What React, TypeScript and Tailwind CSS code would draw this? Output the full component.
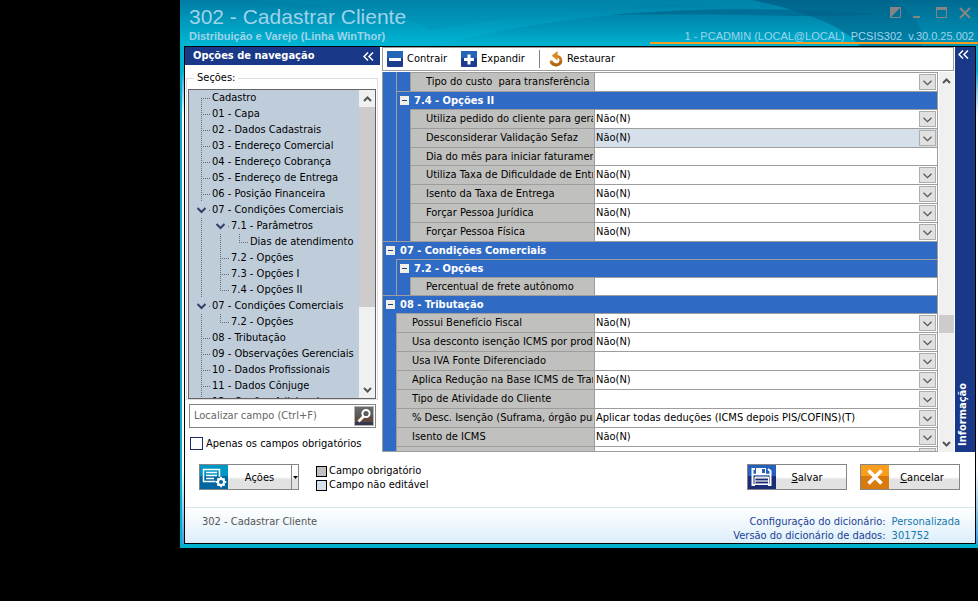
import { useId, useState } from "react";
import type { ReactNode } from "react";

type Cell = "first" | "tee" | "end" | "line" | "open";

const sections: { label: string; cells: Cell[] }[] = [
  { label: "Cadastro", cells: ["first"] },
  { label: "01 - Capa", cells: ["tee"] },
  { label: "02 - Dados Cadastrais", cells: ["tee"] },
  { label: "03 - Endereço Comercial", cells: ["tee"] },
  { label: "04 - Endereço Cobrança", cells: ["tee"] },
  { label: "05 - Endereço de Entrega", cells: ["tee"] },
  { label: "06 - Posição Financeira", cells: ["tee"] },
  { label: "07 - Condições Comerciais", cells: ["open"] },
  { label: "7.1 - Parâmetros", cells: ["line", "open"] },
  { label: "Dias de atendimento", cells: ["line", "line", "end"] },
  { label: "7.2 - Opções", cells: ["line", "tee"] },
  { label: "7.3 - Opções I", cells: ["line", "tee"] },
  { label: "7.4 - Opções II", cells: ["line", "end"] },
  { label: "07 - Condições Comerciais", cells: ["open"] },
  { label: "7.2 - Opções", cells: ["line", "end"] },
  { label: "08 - Tributação", cells: ["tee"] },
  { label: "09 - Observações Gerenciais", cells: ["tee"] },
  { label: "10 - Dados Profissionais", cells: ["tee"] },
  { label: "11 - Dados Cônjuge", cells: ["tee"] },
  { label: "12 - Opções Adicionais", cells: ["tee"] },
];

function TreeCell({ type }: { type: Cell }) {
  if (type === "open") {
    return (
      <svg width="19" height="16" className="shrink-0" fill="none">
        <path d="M5.5 6 L9.5 10 L13.5 6" stroke="#34406b" strokeWidth="2" />
        <path d="M17 8.5 H18" stroke="#6b6b6b" />
      </svg>
    );
  }
  return (
    <svg width="19" height="16" className="shrink-0" fill="none" stroke="#6b6b6b" strokeDasharray="1 1" shapeRendering="crispEdges">
      {type === "first" && <path d="M9.5 8 V16" />}
      {type === "end" && <path d="M9.5 0 V8" />}
      {(type === "tee" || type === "line") && <path d="M9.5 0 V16" />}
      {type !== "line" && <path d="M9 8.5 H18" />}
    </svg>
  );
}

function Chevron({ up = false }: { up?: boolean }) {
  return (
    <svg width="9" height="6" viewBox="0 0 9 6" fill="none" stroke="#565656" strokeWidth="2">
      <path d={up ? "M1 5 L4.5 1.5 L8 5" : "M1 1 L4.5 4.5 L8 1"} />
    </svg>
  );
}

function DoubleChevron() {
  return (
    <svg width="11" height="9" viewBox="0 0 11 9" fill="none" stroke="#fff" strokeWidth="1.5">
      <path d="M5 .5 L1 4.5 L5 8.5 M10 .5 L6 4.5 L10 8.5" />
    </svg>
  );
}

function HeaderArt() {
  return (
    <svg className="absolute inset-0 h-full w-full" viewBox="0 0 798 46" preserveAspectRatio="none">
      <defs>
        <linearGradient id="sky" x1="0" y1="0" x2="0" y2="1">
          <stop offset="0" stopColor="#007ca4" />
          <stop offset=".5" stopColor="#009bbe" />
          <stop offset="1" stopColor="#00b7d4" />
        </linearGradient>
        <linearGradient id="sweep" x1="0" y1="0" x2="0" y2="1">
          <stop offset="0" stopColor="#007fa6" />
          <stop offset=".5" stopColor="#0095b8" />
          <stop offset="1" stopColor="#00b5d2" />
        </linearGradient>
        <linearGradient id="deep" x1="0" y1="0" x2="0" y2="1">
          <stop offset="0" stopColor="#00658c" />
          <stop offset="1" stopColor="#0083a8" />
        </linearGradient>
        <linearGradient id="edge" x1="0" y1="0" x2="0" y2="1">
          <stop offset="0" stopColor="#006a91" />
          <stop offset="1" stopColor="#0096b9" />
        </linearGradient>
      </defs>
      <rect width="798" height="46" fill="url(#sky)" />
      <path d="M60 0 H580 V8 C440 -2 370 12 250 30 C220 10 150 4 60 0Z" fill="#0090b4" opacity=".35" />
      <path d="M250 46 C330 27 430 9 560 9 C620 9 660 12 690 15 L798 46Z" fill="url(#sweep)" />
      <path d="M573 0 H798 V46 H680 C665 26 620 10 573 0Z" fill="url(#deep)" />
      <path d="M430 15 C520 7 620 8 695 14 C650 19 560 13 430 15Z" fill="#006088" opacity=".55" />
      <path d="M711 0 H798 V46 H742 C745 26 732 10 711 0Z" fill="url(#edge)" />
    </svg>
  );
}

function WindowButtons() {
  return (
    <div className="flex items-center gap-[11px] text-[#858585]">
      <button type="button" aria-label="Tema">
        <svg width="12" height="12"><path d="M.5.5 H10.5 V10.5 H.5Z" fill="none" stroke="currentColor" /><path d="M0 0 H11 L0 11Z" fill="currentColor" /></svg>
      </button>
      <button type="button" aria-label="Minimizar">
        <svg width="12" height="12"><path d="M0 9 H7 V11 H0Z" fill="currentColor" /></svg>
      </button>
      <button type="button" aria-label="Maximizar">
        <svg width="12" height="12"><path d="M.5.5 H10.5 V10.5 H.5Z" fill="none" stroke="currentColor" /><path d="M0 0 H11 V3 H0Z" fill="currentColor" /></svg>
      </button>
      <button type="button" aria-label="Fechar">
        <svg width="12" height="12"><path d="M1 1 L11 11 M11 1 L1 11" stroke="currentColor" strokeWidth="2" /></svg>
      </button>
    </div>
  );
}

function ScrollBar({ children }: { children: ReactNode }) {
  return (
    <div className="flex flex-col items-center bg-[#f0f0f0]">
      <span className="flex h-[17px] items-center"><Chevron up /></span>
      <div className="flex w-full flex-1 flex-col">{children}</div>
      <span className="flex h-[17px] items-center"><Chevron /></span>
    </div>
  );
}

function GroupTitle({ title }: { title: string }) {
  return (
    <button type="button" className="flex h-[18px] w-full items-center gap-[5px] border-t border-[#9d9d9d] bg-[#2f6ac4] pl-[3px] font-bold text-white">
      <svg width="9" height="9"><path d="M0 0 H9 V9 H0Z" fill="#f2efe6" /><path d="M2 4.5 H7" stroke="#1d3f8f" /></svg>
      {title}
    </button>
  );
}

function Group({ title, children }: { title?: string; children: ReactNode }) {
  return (
    <div>
      {title && <GroupTitle title={title} />}
      <div className="flex">
        <div className="w-[14px] shrink-0 border-r border-[#9d9d9d] bg-[#2f6ac4]" />
        <div className="min-w-0 flex-1">{children}</div>
      </div>
    </div>
  );
}

type FieldProps = {
  label: string;
  value?: string;
  text?: boolean;
  locked?: boolean;
  outer?: boolean;
};

function Field({ label, value = "", text, locked, outer }: FieldProps) {
  const id = useId();
  return (
    <div className={`flex border-t border-[#9d9d9d] ${text ? "h-[18px]" : "h-[19px]"}`}>
      <label
        htmlFor={id}
        className={`flex shrink-0 items-center border-r border-[#9d9d9d] bg-[#c0c0be] pl-[15px] pr-px ${outer ? "w-[198px]" : "w-[184px]"}`}
      >
        <span className="block overflow-hidden whitespace-pre">{label}</span>
      </label>
      {text ? (
        <input id={id} defaultValue={value} className="min-w-0 flex-1 bg-white px-px outline-none" />
      ) : (
        <div className={`relative flex min-w-0 flex-1 ${locked ? "bg-[#d6e0ea]" : "bg-white"}`}>
          <select id={id} defaultValue={value} className="w-full appearance-none bg-transparent px-px outline-none">
            <option>{value}</option>
          </select>
          <span className="pointer-events-none absolute right-px top-px flex h-4 w-[17px] items-center justify-center border border-[#adadad] bg-[#e1e1e1] pt-[2px]">
            <svg width="9" height="6" viewBox="0 0 9 6" fill="none" stroke="#565656" strokeWidth="1.3">
              <path d="M.5 .8 L4.5 4.6 L8.5 .8" />
            </svg>
          </span>
        </div>
      )}
    </div>
  );
}

function Navigation() {
  const [required, setRequired] = useState(false);
  return (
    <nav className="w-[195px] shrink-0">
      <div className="flex h-[18px] items-center justify-between bg-[#1a3888] pl-2 pr-[6px] font-bold text-white">
        Opções de navegação
        <button type="button" aria-label="Recolher"><DoubleChevron /></button>
      </div>
      <fieldset className="mx-px mt-[6px] w-48 border border-[#dcdcdc] px-px pt-1">
        <legend className="ml-[6px] px-[3px] leading-[14px]">Seções:</legend>
        <div className="flex h-[310px] border border-[#646464] bg-[#bfcddb]">
          <ul className="flex-1 overflow-hidden pl-[3px]">
            {sections.map((s, i) => (
              <li key={i}>
                <button type="button" className="flex h-4 items-center whitespace-nowrap text-left">
                  {s.cells.map((c, j) => <TreeCell key={j} type={c} />)}
                  <span className="pl-px">{s.label}</span>
                </button>
              </li>
            ))}
          </ul>
          <div className="flex w-4">
            <ScrollBar>
              <div className="h-[200px] w-4 bg-[#cdcbcc]" />
            </ScrollBar>
          </div>
        </div>
      </fieldset>
      <div className="ml-1 mt-1 flex h-6 w-[187px] items-center border border-[#858585] bg-white pl-1 pr-px">
        <input aria-label="Localizar campo" placeholder="Localizar campo (Ctrl+F)" className="min-w-0 flex-1 outline-none placeholder:text-[#666]" />
        <button type="button" aria-label="Localizar" className="h-5 w-5 border border-[#b5b5b5] bg-linear-to-b from-[#6b6b6b] to-[#4c4444]">
          <svg width="18" height="18" fill="none" stroke="#fff">
            <path d="M0 10 H18 V15 H0Z" fill="#6b4638" stroke="none" opacity=".7" />
            <path d="M0 15 H18 V18 H0Z" fill="#2b2f52" stroke="none" opacity=".7" />
            <circle cx="11" cy="6.5" r="3.6" strokeWidth="2" />
            <path d="M8.5 9.5 L3.5 14.5" strokeWidth="2.6" />
          </svg>
        </button>
      </div>
      <label className="ml-[5px] mt-[9px] flex h-[13px] items-center gap-[3px] whitespace-nowrap">
        <input
          type="checkbox"
          checked={required}
          onChange={(e) => setRequired(e.target.checked)}
          className="h-[13px] w-[13px] shrink-0 appearance-none border border-[#1f2a63] bg-white checked:bg-[#1a3888]"
        />
        Apenas os campos obrigatórios
      </label>
    </nav>
  );
}

function Toolbar() {
  return (
    <div className="mr-px flex h-6 items-center gap-[14px] border border-[#9d9d9d] bg-white pl-1">
      <button type="button" className="flex items-center gap-1">
        <svg width="16" height="16"><rect width="16" height="16" rx="1" fill="#1b3d8c" /><path d="M0 0 H16 V7 H0Z" fill="#2465b8" /><path d="M2 7 H14 V10 H2Z" fill="#fff" /></svg>
        Contrair
      </button>
      <button type="button" className="flex items-center gap-1">
        <svg width="16" height="16"><rect width="16" height="16" rx="1" fill="#1b3d8c" /><path d="M0 0 H16 V7 H0Z" fill="#2465b8" /><path d="M3 7 H13 V10 H3Z M6.5 3.5 H9.5 V13.5 H6.5Z" fill="#fff" /></svg>
        Expandir
      </button>
      <div className="flex items-center gap-[9px]">
        <span className="h-[18px] w-px bg-[#808080]" />
        <button type="button" className="flex items-center gap-[3px]">
          <svg width="15" height="16" fill="none">
            <path d="M7 5.5 C10.5 5 12.3 7.6 11.9 10 C11.4 12.9 8.8 14.3 6.3 13.9 C4 13.5 2.3 11.8 1.8 9.6" stroke="#c9791c" strokeWidth="2.8" />
            <path d="M11.9 10 C11.4 12.9 8.8 14.3 6.3 13.9 C4.8 13.6 3.5 12.8 2.6 11.6" stroke="#b0650f" strokeWidth="2.8" />
            <path d="M8.6 0 V9.4 L2.6 4.8Z" fill="#d98a26" />
          </svg>
          Restaurar
        </button>
      </div>
    </div>
  );
}

function PropertyGrid() {
  return (
    <div className="mr-px mt-px flex h-[380px]">
      <div className="min-w-0 flex-1 overflow-hidden border-x border-b border-[#9d9d9d]">
        <Group>
          <Group>
            <Field label="Tipo do custo  para transferência" />
          </Group>
          <Group title="7.4 - Opções II">
            <Field label="Utiliza pedido do cliente para geração" value="Não(N)" />
            <Field label="Desconsiderar Validação Sefaz" value="Não(N)" locked />
            <Field label="Dia do mês para iniciar faturamento" text />
            <Field label="Utiliza Taxa de Dificuldade de Entrega" value="Não(N)" />
            <Field label="Isento da Taxa de Entrega" value="Não(N)" />
            <Field label="Forçar Pessoa Jurídica" value="Não(N)" />
            <Field label="Forçar Pessoa Física" value="Não(N)" />
          </Group>
        </Group>
        <Group title="07 - Condições Comerciais">
          <Group title="7.2 - Opções">
            <Field label="Percentual de frete autônomo" text />
          </Group>
        </Group>
        <Group title="08 - Tributação">
          <Field outer label="Possui Benefício Fiscal" value="Não(N)" />
          <Field outer label="Usa desconto isenção ICMS por produto" value="Não(N)" />
          <Field outer label="Usa IVA Fonte Diferenciado" />
          <Field outer label="Aplica Redução na Base ICMS de Transf." value="Não(N)" />
          <Field outer label="Tipo de Atividade do Cliente" />
          <Field outer label="% Desc. Isenção (Suframa, órgão publ.)" value="Aplicar todas deduções (ICMS depois PIS/COFINS)(T)" />
          <Field outer label="Isento de ICMS" value="Não(N)" />
          <Field outer label="" />
        </Group>
      </div>
      <div className="ml-px flex w-[15px]">
        <ScrollBar>
          <div className="flex-[226]" />
          <div className="h-[18px] w-[15px] bg-[#cdcbcc]" />
          <div className="flex-[102]" />
        </ScrollBar>
      </div>
    </div>
  );
}

const actionButton =
  "flex h-[26px] w-[100px] border border-[#858585] bg-linear-to-b from-white from-50% to-[#e2e2e2] to-60%";

function Actions() {
  return (
    <div className="flex items-start pb-[15px] pl-[14px] pr-[15px] pt-3">
      <div className={actionButton}>
        <button type="button" className="flex flex-1 items-center">
          <svg width="28" height="24" fill="none">
            <path d="M0 0 H28 V24 H0Z" fill="#0067a0" />
            <path d="M0 0 H28 V11 H0Z" fill="#0096c4" />
            <path d="M3.5 4.5 H19.5 V16.5 H3.5Z M6 7.5 H17 M6 10.5 H17 M6 13.5 H14" stroke="#fff" strokeWidth="1.5" />
            <circle cx="21" cy="17" r="5.6" fill="#0067a0" />
            <circle cx="21" cy="17" r="3" stroke="#fff" strokeWidth="2.4" />
            <path d="M21 11.8 V22.2 M15.8 17 H26.2 M17.4 13.4 L24.6 20.6 M24.6 13.4 L17.4 20.6" stroke="#fff" strokeWidth="1.8" />
            <circle cx="21" cy="17" r="2" fill="#0067a0" />
          </svg>
          <span className="flex-1 pt-[2px]">Ações</span>
        </button>
        <button type="button" aria-label="Mais ações" className="flex w-[7px] items-center justify-center border-l border-[#858585]">
          <svg width="5" height="3"><path d="M0 0 H5 L2.5 3Z" fill="#000" /></svg>
        </button>
      </div>
      <ul className="ml-[17px]">
        <li className="flex items-center gap-[2px] leading-[14px]">
          <span className="h-[11px] w-[11px] border border-black bg-[#c0c0be]" />Campo obrigatório
        </li>
        <li className="flex items-center gap-[2px] leading-[14px]">
          <span className="h-[11px] w-[11px] border border-black bg-[#d6e0ea]" />Campo não editável
        </li>
      </ul>
      <div className="ml-auto flex gap-[13px]">
        <button type="button" className={actionButton}>
          <svg width="28" height="24" fill="none">
            <path d="M0 0 H28 V24 H0Z" fill="#1c2d78" />
            <path d="M0 0 H28 V11 H0Z" fill="#2560ba" />
            <path d="M7 4 H4.5 V20 H7 M20 4 L22.5 6 V20 H20" stroke="#fff" strokeWidth="2" />
            <path d="M8 3 H18 V9 H8Z" fill="#fff" />
            <path d="M14 4 H17 V8 H14Z" fill="#2560ba" />
            <path d="M4 9.5 H23" stroke="#fff" strokeWidth="1.5" />
            <path d="M7 12 H20.5 V19.5 H7Z" fill="#c9ccd6" stroke="#fff" />
            <path d="M7.5 14.5 H20 M7.5 17.5 H20" stroke="#1c2d78" strokeWidth="1.4" />
          </svg>
          <span className="flex-1 self-center pr-2 pt-[2px]"><u>S</u>alvar</span>
        </button>
        <button type="button" className={actionButton}>
          <svg width="28" height="24" fill="none">
            <path d="M0 0 H28 V24 H0Z" fill="#d97a0e" />
            <path d="M0 0 H28 V11 H0Z" fill="#f99d1c" />
            <path d="M7.5 5.5 L20.5 18.5 M20.5 5.5 L7.5 18.5" stroke="#fff" strokeWidth="3.6" />
          </svg>
          <span className="flex-1 self-center pr-1 pt-px"><u>C</u>ancelar</span>
        </button>
      </div>
    </div>
  );
}

export default function App() {
  return (
    <div className="min-h-screen bg-black pl-[180px] font-['DejaVu_Sans_Condensed','DejaVu_Sans',sans-serif] text-[11px] leading-[14px] text-black">
      <div>
        <header className="relative h-[46px] overflow-hidden bg-[#009cc0] font-['Liberation_Sans',Arial,sans-serif] text-[#9fd3ea]">
          <HeaderArt />
          <div className="relative flex h-full justify-between">
            <div className="pl-[9px] pt-[5px]">
              <h1 className="text-[21px] leading-[24px]">302 - Cadastrar Cliente</h1>
              <p className="font-bold leading-[14px]">Distribuição e Varejo (Linha WinThor)</p>
            </div>
            <div className="flex flex-col items-end">
              <div className="pr-[7px] pt-[7px]"><WindowButtons /></div>
              <p className="mt-auto flex w-[328px] justify-end gap-[6px] border-b-2 border-[#f79c1e] pr-1 leading-[12px]">
                <span>1 - PCADMIN (LOCAL@LOCAL)</span>
                <span>PCSIS302</span>
                <span>v.30.0.25.002</span>
              </p>
              <div className="h-[2px]" />
            </div>
          </div>
        </header>

        <div className="border-b-4 border-l-2 border-[#00b0cd] bg-[linear-gradient(#00b4d2_5%,#6cc3ee_8%,#fff_14%,#fff_85%,#3d9fe0)] px-[2px]">
          <div className="border border-black bg-white">
            <div className="flex">
              <Navigation />
              <main className="ml-[2px] min-w-0 flex-1">
                <Toolbar />
                <PropertyGrid />
              </main>
              <button type="button" className="flex w-5 flex-col items-center justify-between bg-[#1a3888] pb-[6px] pr-1 pt-[3px] font-bold text-white">
                <DoubleChevron />
                <span className="rotate-180 [writing-mode:vertical-rl]">Informação</span>
              </button>
            </div>
            <Actions />
            <footer className="flex h-9 justify-between border-t border-[#d3e3ea] bg-linear-to-b from-white to-[#dceefa] pl-[17px] pr-[15px] pt-[7px]">
              <p className="text-[#555]">302 - Cadastrar Cliente</p>
              <dl className="grid grid-cols-[auto_auto] gap-x-[6px] text-[#1c3f94]">
                <dt className="text-right">Configuração do dicionário:</dt>
                <dd className="text-[#1478ae]">Personalizada</dd>
                <dt className="text-right">Versão do dicionário de dados:</dt>
                <dd className="text-[#1478ae]">301752</dd>
              </dl>
            </footer>
          </div>
        </div>
      </div>
    </div>
  );
}
